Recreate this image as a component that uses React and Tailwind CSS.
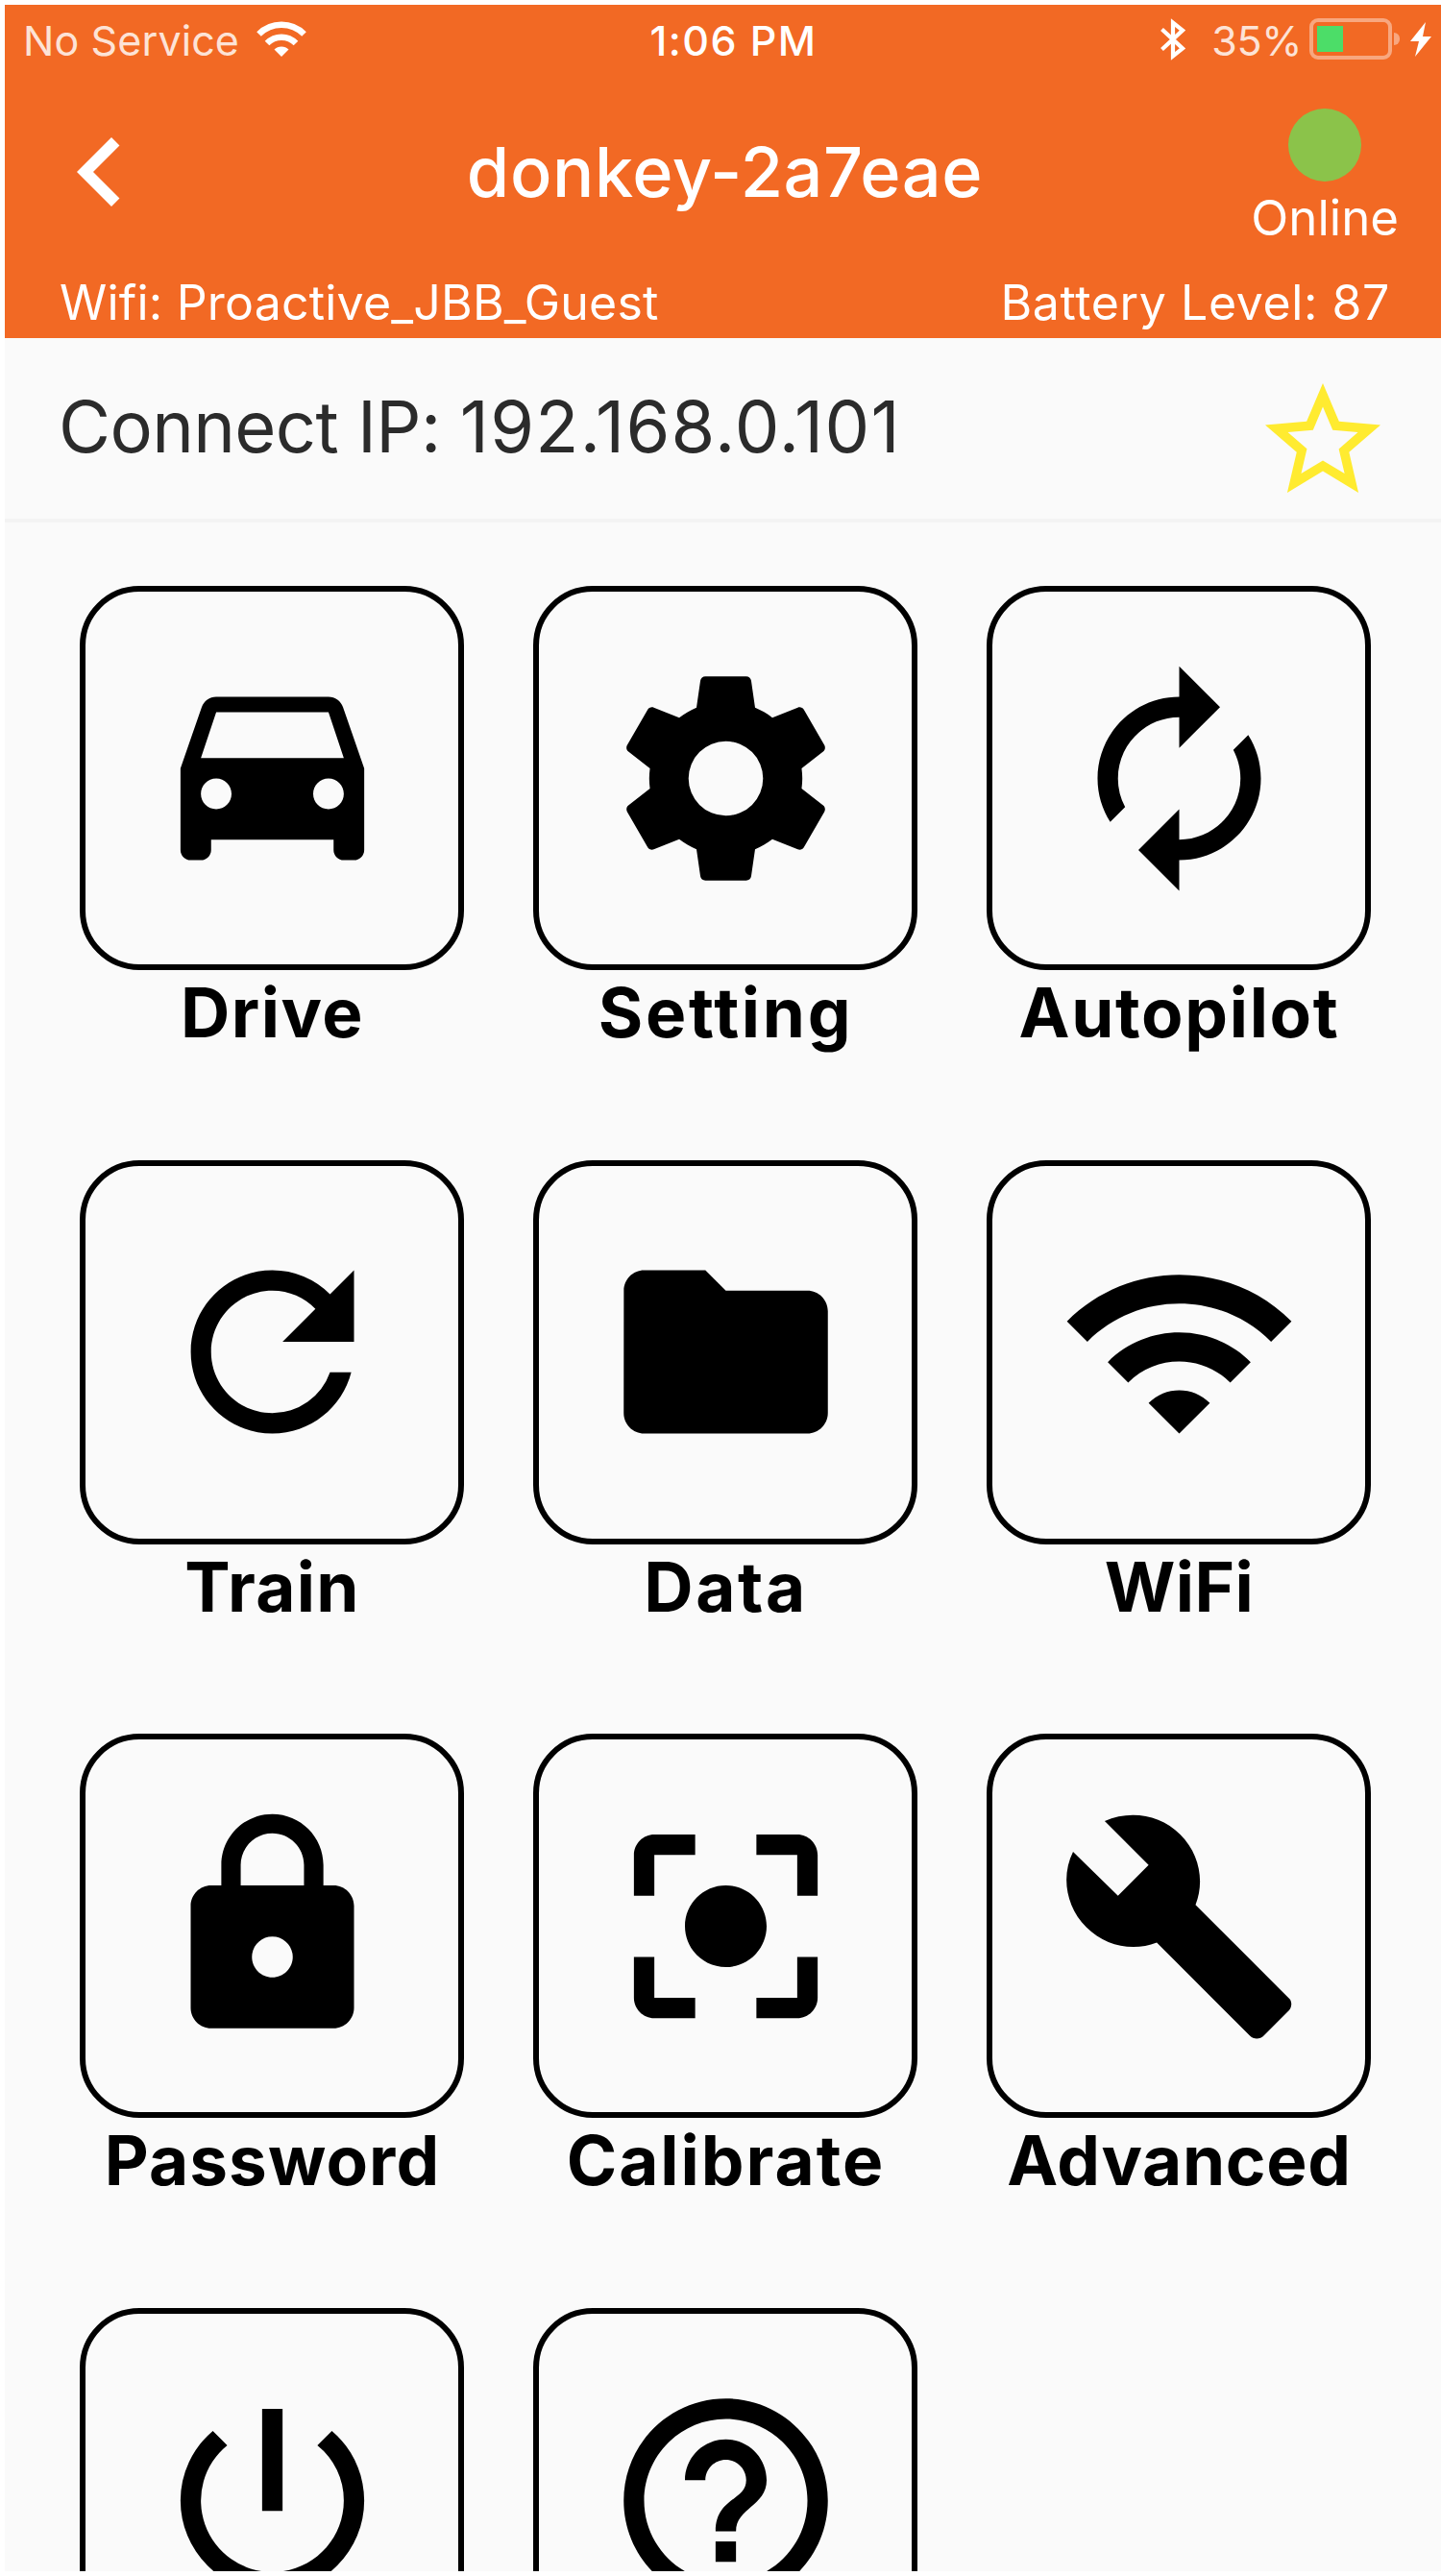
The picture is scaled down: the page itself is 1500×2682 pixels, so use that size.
import {
  MdAutorenew,
  MdBuild,
  MdCenterFocusStrong,
  MdChevronLeft,
  MdFolder,
  MdHelpOutline,
  MdLock,
  MdPowerSettingsNew,
  MdRefresh,
  MdStarBorder,
} from 'react-icons/md';

function CarIcon({ className }) {
  return (
    <svg viewBox="0 0 24 24" fill="currentColor" className={className}>
      <path d="M18.92 5.01C18.72 4.42 18.16 4 17.5 4h-11c-.66 0-1.21.42-1.42 1.01L3 11v8c0 .55.45 1 1 1h1c.55 0 1-.45 1-1v-1h12v1c0 .55.45 1 1 1h1c.55 0 1-.45 1-1v-8l-2.08-5.99zM6.5 15c-.83 0-1.5-.67-1.5-1.5S5.67 12 6.5 12s1.5.67 1.5 1.5S7.33 15 6.5 15zm11 0c-.83 0-1.5-.67-1.5-1.5s.67-1.5 1.5-1.5 1.5.67 1.5 1.5-.67 1.5-1.5 1.5zM5 10l1.5-4.5h11L19 10H5z" />
    </svg>
  );
}

function GearIcon({ className }) {
  return (
    <svg viewBox="0 0 24 24" fill="currentColor" className={className}>
      <path d="M19.43 12.98c.04-.32.07-.64.07-.98s-.03-.66-.07-.98l2.11-1.65c.19-.15.24-.42.12-.64l-2-3.46c-.12-.22-.39-.3-.61-.22l-2.49 1c-.52-.4-1.08-.73-1.69-.98l-.38-2.65C14.46 2.18 14.25 2 14 2h-4c-.25 0-.46.18-.49.42l-.38 2.65c-.61.25-1.17.59-1.69.98l-2.49-1c-.23-.09-.49 0-.61.22l-2 3.46c-.13.22-.07.49.12.64l2.11 1.65c-.04.32-.07.65-.07.98s.03.66.07.98l-2.11 1.65c-.19.15-.24.42-.12.64l2 3.46c.12.22.39.3.61.22l2.49-1c.52.4 1.08.73 1.69.98l.38 2.65c.03.24.24.42.49.42h4c.25 0 .46-.18.49-.42l.38-2.65c.61-.25 1.17-.59 1.69-.98l2.49 1c.23.09.49 0 .61-.22l2-3.46c.12-.22.07-.49-.12-.64l-2.11-1.65zM12 15.65a3.65 3.65 0 1 1 0-7.3 3.65 3.65 0 0 1 0 7.3z" />
    </svg>
  );
}

function WifiIcon({ className }) {
  return (
    <svg viewBox="0 0 24 24" fill="currentColor" className={className}>
      <path d="M1 9l2 2c4.97-4.97 13.03-4.97 18 0l2-2C16.93 2.93 7.08 2.93 1 9zm8 8l3 3 3-3c-1.65-1.66-4.34-1.66-6 0zm-4-4l2 2c2.76-2.76 7.24-2.76 10 0l2-2C15.14 9.14 8.87 9.14 5 13z" />
    </svg>
  );
}

const MENU = [
  { id: 'drive', label: 'Drive', icon: CarIcon, tracking: 'tracking-[1.5px]' },
  { id: 'setting', label: 'Setting', icon: GearIcon, tracking: 'tracking-[2.7px]' },
  { id: 'autopilot', label: 'Autopilot', icon: MdAutorenew, tracking: 'tracking-[1.7px]' },
  { id: 'train', label: 'Train', icon: MdRefresh, tracking: 'tracking-[1.3px]' },
  { id: 'data', label: 'Data', icon: MdFolder, tracking: 'tracking-[2.6px]' },
  { id: 'wifi', label: 'WiFi', icon: WifiIcon, tracking: 'tracking-[0.4px]' },
  { id: 'password', label: 'Password', icon: MdLock, tracking: 'tracking-[1.1px]' },
  { id: 'calibrate', label: 'Calibrate', icon: MdCenterFocusStrong, tracking: 'tracking-[2px]' },
  { id: 'advanced', label: 'Advanced', icon: MdBuild, tracking: 'tracking-[0.7px]' },
  { id: 'power', icon: MdPowerSettingsNew },
  { id: 'help', icon: MdHelpOutline },
];

function StatusBar() {
  return (
    <div className="grid grid-cols-[1fr_auto_1fr] h-[75px] text-[43px] leading-[75px] text-[#fde3d6]">
      <div className="flex pl-[19px]">
        <span className="tracking-[0.1px]">No Service</span>
        <svg viewBox="0 0 52 38" className="ml-[18px] mt-[16px] w-[52px] h-[38px] text-white" fill="none" stroke="currentColor">
          <path d="M2.5 14.5C15.5 1.5 36.5 1.5 49.5 14.5" strokeWidth="6.5" />
          <path d="M11 24C19.5 15.5 32.5 15.5 41 24" strokeWidth="6.5" />
          <path d="M26 38l-7.5-7.5a10.6 10.6 0 0 1 15 0z" fill="currentColor" stroke="none" />
        </svg>
      </div>
      <span className="pl-[22px] font-medium tracking-[1.4px] text-white">1:06 PM</span>
      <div className="flex justify-end pr-[10px]">
        <svg viewBox="0 0 28 44" fill="none" stroke="#fff" strokeWidth="4.2" className="mt-[14px] mr-[26px] w-[28px] h-[44px]">
          <path d="M2.500 11.500L24 31.500 14 39.500V4.500L24 12.500 2.500 32.500" />
        </svg>
        <span className="tracking-[-0.4px]">35%</span>
        <div className="mt-[14px] ml-[8px] w-[86px] h-[43px] rounded-[9px] border-4 border-[#f8a77f] p-[4px]">
          <div className="h-full w-[27px] bg-[#4cdd68]" />
        </div>
        <div className="mt-[29px] ml-[2px] w-[6px] h-[13px] rounded-r-full bg-[#f8a77f]" />
        <svg viewBox="0 0 22 36" fill="#fff" className="mt-[18px] ml-[11px] w-[22px] h-[36px]">
          <path d="M16 0L0 20h9L5 36l17-21h-9z" />
        </svg>
      </div>
    </div>
  );
}

function Header() {
  return (
    <header className="h-[347px] bg-[#f26924] text-white">
      <StatusBar />
      <div className="grid grid-cols-[1fr_auto_1fr] h-[196px]">
        <MdChevronLeft className="mt-[27px] ml-[27px] size-[144px]" />
        <h1 className="pl-[4px] text-[72px] leading-[197px] font-medium tracking-[0.6px]">donkey-2a7eae</h1>
        <div className="flex flex-col items-center justify-self-end pt-[33px] mr-[44px]">
          <div className="size-[76px] rounded-full bg-[#8bc34a]" />
          <span className="text-[51px] leading-[75px]">Online</span>
        </div>
      </div>
      <div className="flex justify-between pr-[53px] pl-[57px] text-[50px] leading-[79px]">
        <span className="tracking-[0.2px]">Wifi: Proactive_JBB_Guest</span>
        <span className="tracking-[0.6px]">Battery Level: 87</span>
      </div>
    </header>
  );
}

function MenuItem({ label, icon: Icon, tracking }) {
  return (
    <div className="flex flex-col items-center">
      <div className="flex size-[400px] items-center justify-center rounded-[62px] border-[6px] border-black">
        <Icon className="size-[255px]" />
      </div>
      {label && (
        <span className={`pl-[1px] text-[71px] leading-[88px] font-bold ${tracking}`}>{label}</span>
      )}
    </div>
  );
}

export default function App() {
  return (
    <div className="w-[1500px] h-[2682px] overflow-hidden bg-white pt-[5px] pb-[5px] pl-[5px] font-['Inter',sans-serif] text-black">
      <div className="h-[2672px] overflow-hidden bg-[#fafafa]">
        <Header />
        <div className="flex h-[192px] justify-between border-b-4 border-[#f3f3f3] pr-[51px] pl-[56px]">
          <p className="mt-[52px] text-[74px] leading-[80px] text-[#2b2b2b]">
            <span className="tracking-[-0.65px]">Connect IP: </span>
            <span className="tracking-[1.3px]">192.168.0.101</span>
          </p>
          <MdStarBorder className="mt-[35px] size-[144px] text-[#ffeb30]" />
        </div>
        <main className="grid grid-cols-[repeat(3,400px)] gap-x-[72px] gap-y-[109.7px] pt-[66px] pl-[78px]">
          {MENU.map((item) => (
            <MenuItem key={item.id} {...item} />
          ))}
        </main>
      </div>
    </div>
  );
}
